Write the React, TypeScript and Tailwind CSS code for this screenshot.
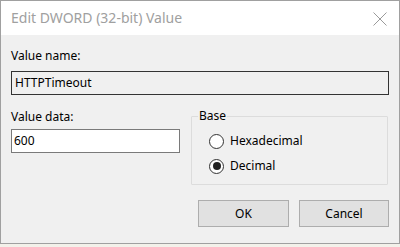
function Radio({ label, checked }: { label: string; checked?: boolean }) {
    return (
        <div className="flex items-center gap-[6px] h-[16px]">
            <span className="flex items-center justify-center w-[15px] h-[15px] rounded-full border border-[#333] bg-white">
                {checked && <span className="w-[8px] h-[8px] rounded-full bg-[#222]" />}
            </span>
            <span>{label}</span>
        </div>
    );
}

export default function App() {
    return (
        <div
            className="w-[400px] h-[247px] bg-[#f3f1ea] text-[12px] leading-[16px] text-black"
            style={{ fontFamily: '"Noto Sans", "Liberation Sans", sans-serif' }}
        >
            <div className="h-[244px] flex flex-col border border-[#a0a0a0] bg-[#f0f0f0]">
                {/* title bar */}
                <div className="h-[34px] bg-white flex items-center justify-between pl-[10px] pr-[12px]">
                    <span className="text-[14px] text-[#a0a0a0]">Edit DWORD (32-bit) Value</span>
                    <svg width="14" height="14" viewBox="0 0 14 14" className="mt-[1px]">
                        <path d="M0.5 0.5 L13.5 13.5 M13.5 0.5 L0.5 13.5" stroke="#9a9a9a" strokeWidth="1" />
                    </svg>
                </div>

                {/* body */}
                <div className="flex-1 px-[10px] pt-[13px]">
                    <div>Value name:</div>
                    <div className="mt-[7px] h-[24px] border border-[#333] flex items-center px-[3px]">
                        HTTPTimeout
                    </div>

                    <div className="flex mt-[14px]">
                        <div className="w-[169px] shrink-0">
                            <div>Value data:</div>
                            <div className="mt-[4px] h-[24px] border border-[#7a7a7a] bg-white flex items-center px-[2px]">
                                600
                            </div>
                        </div>
                        <fieldset className="ml-[11px] mt-[-1px] w-[197px] h-[77px] border border-[#dcdcdc] rounded-[1px]">
                            <legend className="ml-[6px] px-[1px]">Base</legend>
                            <div className="flex flex-col gap-[9px] mt-[9px] pl-[17px]">
                                <Radio label="Hexadecimal" />
                                <Radio label="Decimal" checked />
                            </div>
                        </fieldset>
                    </div>

                    <div className="flex justify-end gap-[10px] mt-[15px]">
                        <button className="w-[91px] h-[27px] bg-[#e1e1e1] border border-[#adadad]">OK</button>
                        <button className="w-[90px] h-[27px] bg-[#e1e1e1] border border-[#adadad]">Cancel</button>
                    </div>
                </div>
            </div>
        </div>
    );
}
